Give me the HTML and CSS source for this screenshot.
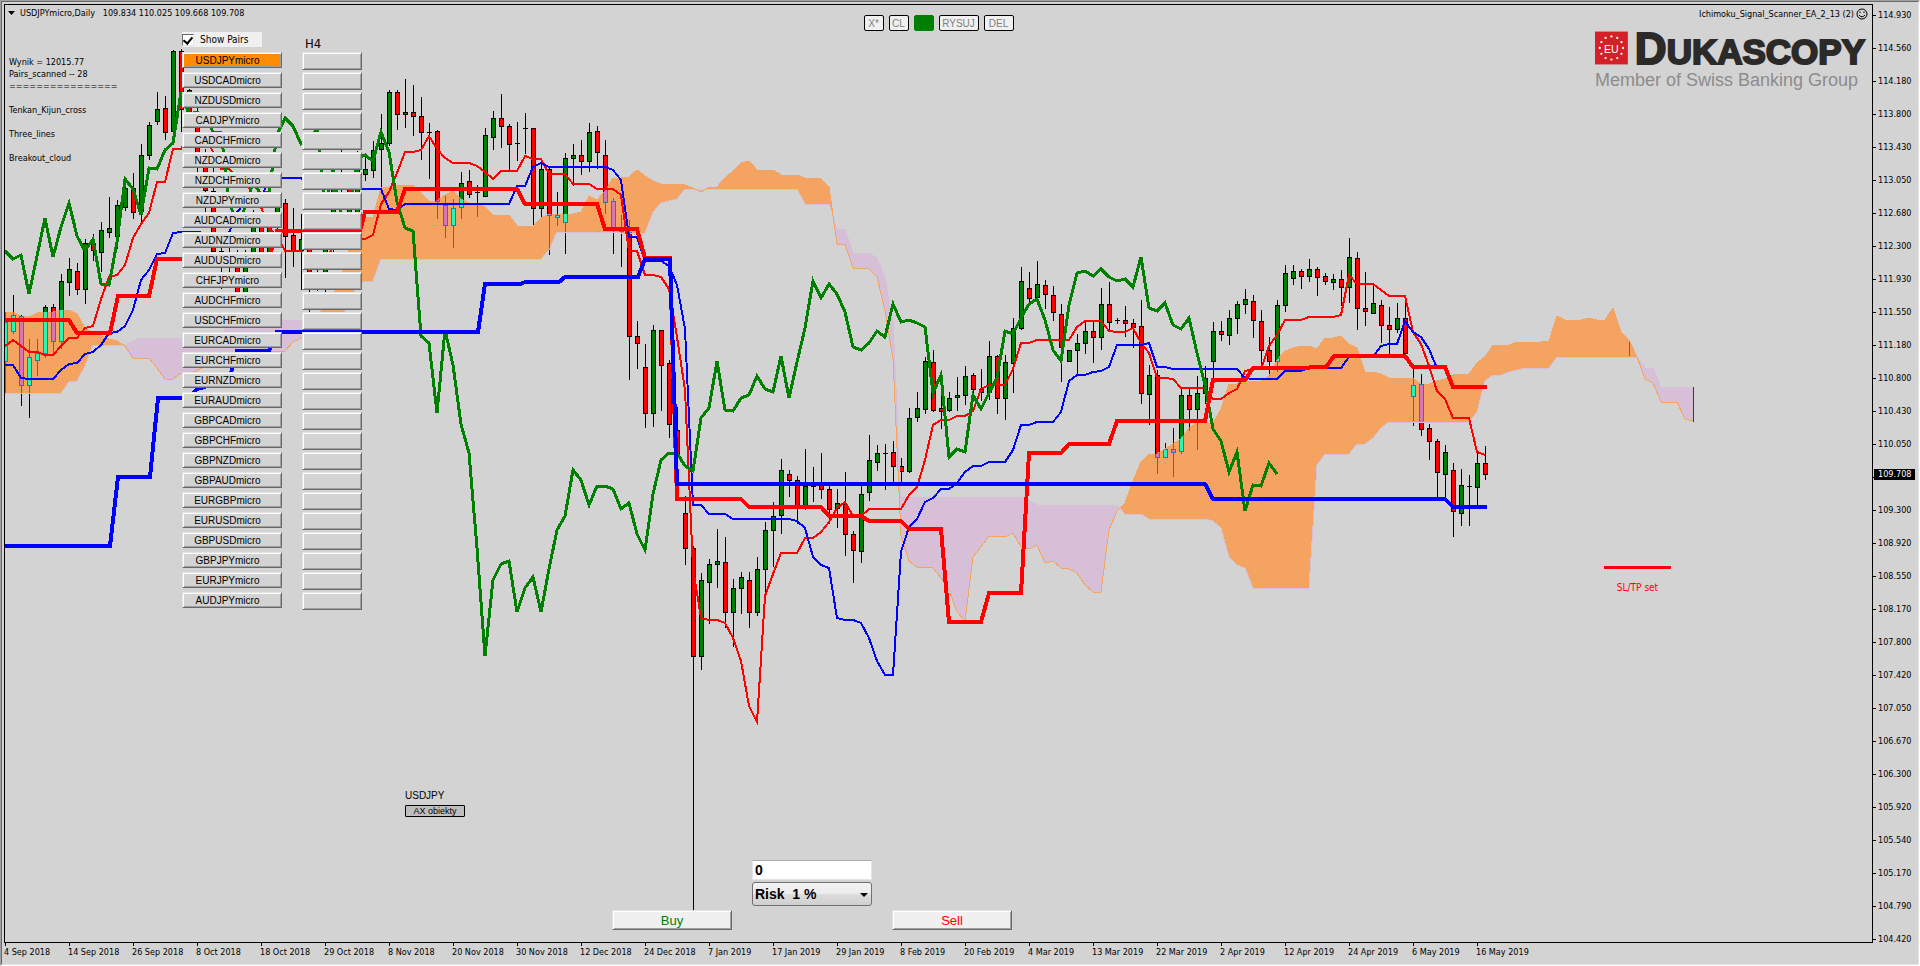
FILE: index.html
```html
<!DOCTYPE html>
<html lang="en">
  <head>
    <meta charset="UTF-8" />
    <meta name="viewport" content="width=device-width, initial-scale=1.0" />
    <title>USDJPYmicro,Daily</title>
    <link rel="stylesheet" href="styles.css" />
  </head>
  <body>
    <div class="frame">
      <main class="terminal">
        <section class="plot">
          <svg id="chart" class="chart" viewBox="5 5 1867 937" preserveAspectRatio="none"></svg>

          <h1 class="symbol">
            <svg width="7" height="4" viewBox="0 0 7 4"><path d="M0 0h7L3.5 4z" /></svg>
            USDJPYmicro,Daily&nbsp;&nbsp; 109.834 110.025 109.668 109.708
          </h1>

          <pre class="comment">
Wynik = 12015.77
Pairs_scanned -- 28
================

Tenkan_Kijun_cross

Three_lines

Breakout_cloud</pre>

          <div class="pairs">
            <label class="show-pairs"><input type="checkbox" id="showPairs" checked /> Show Pairs</label>
            <div id="pairList" class="pair-list"></div>
          </div>
          <div class="signals">
            <span class="timeframe">H4</span>
            <div id="signalList" class="signal-list"></div>
          </div>

          <div class="toolbar">
            <button>X*</button>
            <button>CL</button>
            <button class="on" aria-label="Active"></button>
            <button class="wide">RYSUJ</button>
            <button class="medium">DEL</button>
          </div>

          <div class="expert">
            Ichimoku_Signal_Scanner_EA_2_13 (2)
            <svg width="12" height="12" viewBox="0 0 12 12" fill="none" stroke="#000">
              <circle cx="6" cy="6" r="5" />
              <path d="M3 7q3 3.500 6 0M4 3.500v1.500M8 3.500v1.500" />
            </svg>
          </div>

          <div class="logo">
            <div class="logo-row">
              <svg width="34" height="34" viewBox="0 0 34 34">
                <rect width="34" height="34" fill="#d42027" />
                <text x="17" y="22" text-anchor="middle">EU</text>
                <g id="stars" fill="#fff"></g>
              </svg>
              <span class="logo-name"><b>D</b>UKASCOPY</span>
            </div>
            <div class="logo-sub">Member of Swiss Banking Group</div>
          </div>

          <div class="sltp">SL/TP set</div>

          <div class="objects">
            <span>USDJPY</span>
            <button>AX obiekty</button>
          </div>

          <form class="trade">
            <button type="button" class="buy">Buy</button>
            <div class="risk">
              <input type="text" value="0" aria-label="Volume" />
              <div class="select">
                <select aria-label="Risk">
                  <option>Risk &nbsp;1 %</option>
                  <option>Risk &nbsp;2 %</option>
                </select>
              </div>
            </div>
            <button type="button" class="sell">Sell</button>
          </form>
        </section>

        <aside class="price-axis">
          <ul id="prices"></ul>
          <span class="last-price">109.708</span>
        </aside>

        <ul id="dates" class="time-axis"></ul>
      </main>
    </div>
    <script src="script.js"></script>
  </body>
</html>
```
FILE: styles.css
```css
* {
  box-sizing: border-box;
}
body {
  margin: 0;
  height: 100vh;
  background: #d3d3d3;
  color: #000;
  font-family: "DejaVu Sans Condensed", "DejaVu Sans", sans-serif;
  font-size: 9px;
  line-height: 12px;
  overflow: hidden;
}
ul {
  list-style: none;
  margin: 0;
  padding: 0;
}
button,
input,
select {
  font-family: "Liberation Sans", Arial, sans-serif;
  margin: 0;
  padding: 0;
}

/* window edge */
.frame {
  height: 100%;
  border: 1px solid;
  border-color: #a0a0a0 #fff #fff #a0a0a0;
}
.terminal {
  height: 100%;
  display: grid;
  grid-template-columns: 1fr 45px;
  grid-template-rows: 1fr 21px;
  padding: 2px 0 0 2px;
  border: 1px solid;
  border-color: #696969 #e3e3e3 #e3e3e3 #696969;
}
.plot {
  position: relative;
  border: 1px solid #000;
  min-width: 0;
  overflow: hidden;
}
.chart {
  display: block;
  width: 100%;
  height: 100%;
  shape-rendering: crispEdges;
}
.chart polyline {
  fill: none;
}

/* axes */
.price-axis {
  grid-row: 1 / 3;
  grid-column: 2;
  position: relative;
}
.price-axis ul {
  height: 100%;
  display: flex;
  flex-direction: column;
  justify-content: space-between;
  padding: 5px 0 19px;
}
.price-axis li {
  display: flex;
  align-items: center;
  gap: 2px;
}
.price-axis li::before {
  content: "";
  width: 3px;
  height: 1px;
  background: #000;
}
.last-price {
  position: absolute;
  top: 465px;
  left: 1px;
  width: 41px;
  padding-left: 4px;
  line-height: 11px;
  background: #000;
  color: #fff;
}
.time-axis {
  display: flex;
  min-width: 0;
  overflow: hidden;
}
.time-axis li {
  flex: 0 0 64px;
  white-space: nowrap;
}
.time-axis li::before {
  content: "";
  display: block;
  width: 1px;
  height: 3px;
  margin-left: 1px;
  background: #000;
}

/* labels over the chart */
.symbol {
  position: absolute;
  top: 2px;
  left: 3px;
  display: flex;
  align-items: center;
  gap: 5px;
  margin: 0;
  font-size: 9px;
  font-weight: normal;
}
.comment {
  position: absolute;
  top: 51px;
  left: 4px;
  margin: 0;
  font-family: inherit;
}
.expert {
  position: absolute;
  top: 3px;
  right: 4px;
  display: flex;
  align-items: center;
  gap: 2px;
}

/* pair scanner */
.pairs {
  position: absolute;
  top: 27px;
  left: 177px;
  width: 100px;
}
.show-pairs {
  display: flex;
  align-items: center;
  gap: 6px;
  width: 80px;
  height: 15px;
  margin-bottom: 5px;
  background: #f0f0f0;
  font-size: 10px;
}
.show-pairs input {
  appearance: none;
  width: 12px;
  height: 12px;
  background: #fff;
  border: 1px solid;
  border-color: #696969 #e3e3e3 #e3e3e3 #696969;
}
.show-pairs input:checked::before {
  content: "";
  display: block;
  width: 4px;
  height: 7px;
  margin: 0 auto;
  border: solid #000;
  border-width: 0 2px 2px 0;
  transform: rotate(40deg);
}
.pair-list,
.signal-list {
  display: flex;
  flex-direction: column;
}
.pair-list {
  gap: 4px;
}
.pair-list[hidden] {
  display: none;
}
.signal-list {
  gap: 2px;
}
.pair-list button,
.signal-list button,
.trade button {
  background: #d3d3d3;
  border: 1px solid;
  border-color: #e3e3e3 #696969 #696969 #e3e3e3;
  box-shadow: inset 1px 1px #fff, inset -1px -1px #a0a0a0;
}
.pair-list button {
  height: 16px;
  font-size: 10px;
  padding-right: 9px;
}
.pair-list .active {
  background: #ff8c00;
}
.signals {
  position: absolute;
  top: 30px;
  left: 297px;
  width: 60px;
}
.timeframe {
  display: block;
  height: 17px;
  padding-left: 3px;
  font-size: 13px;
  line-height: 17px;
}
.signal-list button {
  height: 18px;
}

.toolbar {
  position: absolute;
  top: 10px;
  left: 0;
  right: 0;
  display: flex;
  justify-content: center;
  gap: 5px;
}
.toolbar button {
  width: 20px;
  height: 16px;
  border: 1px solid #000;
  border-radius: 2px;
  background: #f0f0f0;
  color: #808080;
  font-size: 10px;
}
.toolbar .on {
  background: #008000;
  border-color: #008000;
}
.toolbar .wide {
  width: 40px;
}
.toolbar .medium {
  width: 30px;
}

.logo {
  position: absolute;
  top: 26px;
  right: 7px;
  width: 270px;
}
.logo-row {
  display: flex;
  align-items: flex-end;
  gap: 7px;
  height: 34px;
}
.logo text {
  fill: #fff;
  font: 11px "Liberation Sans", Arial, sans-serif;
}
.logo-name {
  font: bold 35px/27px "Liberation Sans", Arial, sans-serif;
  color: #2b2a29;
  -webkit-text-stroke: 2px #2b2a29;
}
.logo-name b {
  font-size: 44px;
}
.logo-sub {
  margin-top: 4px;
  color: #8c8c8c;
  font: 18px/22px "Liberation Sans", Arial, sans-serif;
  white-space: nowrap;
}

.sltp {
  position: absolute;
  top: 561px;
  right: 201px;
  width: 67px;
  padding-top: 13px;
  border-top: 3px solid #f00;
  color: #f00;
  font-size: 10px;
  text-align: center;
}

.objects {
  position: absolute;
  bottom: 125px;
  left: 400px;
  display: flex;
  flex-direction: column;
  gap: 3px;
  width: 60px;
  font: 10px/12px "Liberation Sans", Arial, sans-serif;
}
.objects button {
  height: 12px;
  border: 1px solid #000;
  border-radius: 1px;
  background: #bebebe;
  font-size: 9px;
  line-height: 10px;
}

/* order panel */
.trade {
  position: absolute;
  bottom: 12px;
  left: 607px;
  display: flex;
  align-items: flex-end;
  gap: 20px;
}
.trade button {
  width: 120px;
  height: 20px;
  background: #f0f0f0;
  font-size: 13px;
}
.trade .buy {
  color: #008000;
}
.trade .sell {
  color: #f00;
}
.risk {
  display: flex;
  flex-direction: column;
  gap: 2px;
  width: 120px;
  padding-bottom: 24px;
}
.risk input {
  width: 100%;
  height: 20px;
  padding-left: 2px;
  border: 1px solid;
  border-color: #abadb3 #e2e3ea #e2e3ea;
  background: #fff;
  font-size: 14px;
  font-weight: bold;
}
.select {
  position: relative;
}
.select select {
  display: block;
  appearance: none;
  width: 100%;
  height: 24px;
  padding-left: 2px;
  border: 1px solid #707070;
  border-radius: 3px;
  background: linear-gradient(#f2f2f2, #ebebeb 50%, #dddddd 50%, #cfcfcf);
  color: #000;
  font-size: 14px;
  font-weight: bold;
}
.select::after {
  content: "";
  position: absolute;
  top: 11px;
  right: 4px;
  border: solid transparent;
  border-width: 4px 4px 0;
  border-top-color: #000;
}
```
FILE: script.js
```js
const pairs = [
  "USDJPY", "USDCAD", "NZDUSD", "CADJPY", "CADCHF", "NZDCAD", "NZDCHF",
  "NZDJPY", "AUDCAD", "AUDNZD", "AUDUSD", "CHFJPY", "AUDCHF", "USDCHF",
  "EURCAD", "EURCHF", "EURNZD", "EURAUD", "GBPCAD", "GBPCHF", "GBPNZD",
  "GBPAUD", "EURGBP", "EURUSD", "GBPUSD", "GBPJPY", "EURJPY", "AUDJPY",
];
const prices = [
  "114.930", "114.560", "114.180", "113.800", "113.430", "113.050", "112.680",
  "112.300", "111.930", "111.550", "111.180", "110.800", "110.430", "110.050",
  "109.670", "109.300", "108.920", "108.550", "108.170", "107.800", "107.420",
  "107.050", "106.670", "106.300", "105.920", "105.540", "105.170", "104.790",
  "104.420",
];
const dates = [
  "4 Sep 2018", "14 Sep 2018", "26 Sep 2018", "8 Oct 2018", "18 Oct 2018",
  "29 Oct 2018", "8 Nov 2018", "20 Nov 2018", "30 Nov 2018", "12 Dec 2018",
  "24 Dec 2018", "7 Jan 2019", "17 Jan 2019", "29 Jan 2019", "8 Feb 2019",
  "20 Feb 2019", "4 Mar 2019", "13 Mar 2019", "22 Mar 2019", "2 Apr 2019",
  "12 Apr 2019", "24 Apr 2019", "6 May 2019", "16 May 2019",
];

// open, high, low, close on the chart's vertical scale
const candles = [
  [361,312,393,322],[331,295,333,315],[316,315,405,385],[385,339,417,357],[360,339,375,353],
  [353,305,357,307],[307,304,352,341],[341,274,348,281],[282,258,295,269],[271,263,294,289],
  [289,239,303,243],[243,234,260,250],[252,222,271,230],[232,197,237,228],[236,200,248,205],
  [207,182,210,188],[188,173,218,212],[211,144,223,155],[155,122,159,125],[121,92,124,109],
  [108,96,139,132],[131,50,133,51],[51,49,131,109],[90,89,113,112],[112,107,180,152],
  [155,149,225,190],[191,165,255,251],[251,240,288,259],[259,240,280,255],[255,250,307,294],
  [294,250,300,256],[256,210,262,218],[218,212,262,257],[257,220,262,227],[227,195,230,203],
  [203,199,277,236],[235,208,266,251],[250,214,289,239],[239,230,329,284],[284,262,290,285],
  [285,238,293,242],[242,165,255,179],[179,149,200,189],[189,180,225,215],[215,151,220,168],
  [174,157,180,169],[170,141,177,150],[149,114,193,143],[143,90,145,92],[92,90,129,114],
  [114,79,127,112],[112,85,135,116],[116,97,159,132],[132,123,178,132],[131,130,218,201],
  [205,196,237,225],[225,199,247,208],[207,172,218,183],[181,170,197,194],[192,185,216,192],
  [196,128,196,135],[137,111,149,118],[118,94,147,126],[126,124,169,144],[143,122,160,143],
  [128,113,153,128],[128,128,224,208],[208,163,217,169],[169,167,254,215],[217,192,225,215],
  [222,153,253,158],[158,144,185,155],[155,140,174,161],[161,123,171,132],[131,126,168,152],
  [155,140,213,202],[201,198,253,228],[229,215,266,231],[232,220,379,336],[336,321,368,343],
  [367,344,427,413],[413,325,426,330],[330,330,410,365],[363,360,437,424],[430,407,476,453],
  [513,496,564,548],[548,546,915,656],[656,573,669,580],[582,559,623,564],[564,529,587,561],
  [562,537,627,612],[612,579,646,588],[588,572,613,577],[580,572,627,612],[612,557,615,569],
  [569,522,594,530],[530,502,566,516],[515,459,533,470],[474,470,496,480],[480,476,523,505],
  [505,449,509,486],[486,467,501,486],[485,453,498,489],[489,485,523,509],[508,489,527,503],
  [504,472,555,534],[534,531,582,550],[551,483,562,494],[492,435,500,460],[462,445,470,453],
  [453,444,489,453],[452,441,482,466],[466,458,481,471],[471,408,472,418],[417,392,421,408],
  [409,357,413,361],[362,350,411,410],[408,392,428,411],[410,392,411,398],[397,377,410,395],
  [395,366,404,376],[375,373,398,389],[389,369,400,392],[392,341,399,356],[356,355,413,398],
  [398,355,419,362],[363,318,392,328],[328,267,329,281],[288,272,303,298],[297,261,297,284],
  [285,280,308,294],[295,286,320,312],[314,304,381,347],[361,350,361,350],[350,334,373,343],
  [343,321,353,331],[331,322,362,337],[337,288,349,304],[304,282,330,322],[320,318,323,320],
  [320,306,336,323],[323,319,347,327],[326,300,403,393],[394,365,424,375],[375,370,473,457],
  [457,443,457,449],[449,428,476,452],[451,388,453,395],[395,387,430,409],[409,376,449,393],
  [393,366,403,378],[361,322,380,331],[331,321,340,334],[335,310,344,318],[318,301,333,304],
  [304,289,313,299],[301,295,337,320],[321,310,364,350],[350,337,375,361],[361,300,371,305],
  [305,265,311,273],[278,265,284,271],[271,269,288,276],[276,259,281,269],[269,267,295,277],
  [276,273,284,281],[282,274,289,279],[279,270,305,287],[287,238,302,257],[258,252,329,308],
  [308,272,325,311],[313,283,313,303],[305,300,342,325],[325,307,354,329],[329,303,332,318],
  [318,299,354,353],[396,367,425,385],[384,374,435,429],[428,424,459,441],[441,439,498,472],
  [474,445,497,452],[470,463,536,511],[513,469,525,485],[486,475,525,486],[487,450,507,463],
  [463,446,479,474],
];

// values for the bars whose look-back reaches before the first candle
const firstTenkan = [346, 340, 346, 352, 352, 355, 355, 346];
const firstKijun = [
  365, 365, 378, 379, 379, 379, 379, 370, 364, 363, 354, 352, 345, 333, 332,
  326, 310, 280, 270, 254, 253, 233, 232, 232, 232,
];
const firstSpanA = [
  312, 312, 316, 317, 313, 312, 312, 310, 310, 314, 328, 333, 336, 339, 341,
  346, 358, 358, 358, 368, 379, 379, 373, 373, 371, 366, 366, 364, 362, 360,
  358, 356, 354, 352, 351, 351, 342, 338, 330, 316, 306, 296, 276, 250, 225,
  217, 217, 188, 187, 185, 185,
];
const firstSpanB = [
  393, 393, 393, 393, 393, 393, 393, 393, 382, 381, 366, 345, 345, 345, 345,
  345, 341, 338, 338, 338, 338, 338, 338, 338, 338, 338, 338, 338, 320, 320,
  320, 320, 320, 320, 320, 320, 320, 320, 320, 320, 320, 320, 318, 305, 285,
  281, 281, 259, 259, 259, 259, 259, 259, 259, 259, 259, 259, 259, 259, 259,
  259, 259, 259, 259, 259, 259, 259, 259, 250, 232, 232, 232, 232, 232, 232,
  232, 232,
];

// weekly lines
const weeklyTenkan =
  "5,320 69,320 77,333 110,333 118,296 149,296 157,259 269,259 277,231 360,231 365,212 397,212 405,189 517,189 525,204 597,204 605,229 637,229 645,258 670,258 677,499 741,499 749,507 821,507 829,516 861,516 869,521 901,521 909,529 941,529 949,622 981,622 989,593 1021,593 1029,453 1061,453 1069,444 1109,444 1117,421 1205,421 1213,380 1245,380 1253,368 1293,368 1326,367 1334,356 1405,356 1413,367 1445,367 1453,387 1487,387";
const weeklyKijun =
  "5,546 110,546 118,477 150,477 158,398 189,398 197,389 229,380 237,351 269,351 277,332 478,332 485,284 521,284 525,282 559,282 565,277 638,277 645,259 670,259 677,484 1205,484 1213,499 1445,499 1453,507 1487,507";

const STEP = 8;
const x = (i) => 5 + i * STEP;

function middle(end, period) {
  const part = candles.slice(end - period + 1, end + 1);
  const high = Math.min(...part.map((c) => c[1]));
  const low = Math.max(...part.map((c) => c[2]));
  return (high + low) / 2;
}

function line(values, color, width) {
  const points = values.map((y, i) => x(i) + "," + Math.round(y)).join(" ");
  return `<polyline points="${points}" stroke="${color}" stroke-width="${width}"/>`;
}

function drawCandles(up, down, ink) {
  let out = "";
  candles.forEach(([open, high, low, close], i) => {
    const top = Math.min(open, close);
    const height = Math.abs(open - close) + 1;
    out += `<path fill="${ink}" d="M${x(i)} ${high}h1V${low + 1}h-1zM${x(i) - 2} ${top}h5v${height}h-5z"/>`;
    if (height > 2) {
      out += `<path fill="${close < open ? up : down}" d="M${x(i) - 1} ${top + 1}h3v${height - 2}h-3z"/>`;
    }
  });
  return out;
}

function drawChart() {
  const tenkan = candles.map((c, i) => (i < 8 ? firstTenkan[i] : middle(i, 9)));
  const kijun = candles.map((c, i) => (i < 25 ? firstKijun[i] : middle(i, 26)));
  const spanA = firstSpanA.slice();
  const spanB = firstSpanB.slice();
  for (let i = spanA.length; i < candles.length + 26; i++) {
    spanA.push((tenkan[i - 26] + kijun[i - 26]) / 2);
  }
  for (let i = spanB.length; i < candles.length + 26; i++) {
    spanB.push(middle(i - 26, 52));
  }
  const chikou = candles.slice(26).map((c) => c[3]);

  let bull = "";
  let bear = "";
  for (let i = 0; i < spanA.length - 1; i++) {
    const a1 = spanA[i], a2 = spanA[i + 1], b1 = spanB[i], b2 = spanB[i + 1];
    const d1 = b1 - a1, d2 = b2 - a2;
    if (d1 * d2 < 0) {
      const t = d1 / (d1 - d2);
      const cross = `${x(i) + STEP * t} ${a1 + (a2 - a1) * t}`;
      const left = `M${x(i)} ${a1}L${cross}L${x(i)} ${b1}z`;
      const right = `M${x(i + 1)} ${a2}L${cross}L${x(i + 1)} ${b2}z`;
      bull += d1 > 0 ? left : right;
      bear += d1 > 0 ? right : left;
    } else {
      const part = `M${x(i)} ${a1}L${x(i + 1)} ${a2}V${b2}L${x(i)} ${b1}z`;
      if (d1 + d2 > 0) bull += part;
      else bear += part;
    }
  }

  document.getElementById("chart").innerHTML = `
    <clipPath id="cloud"><path d="${bull}"/></clipPath>
    ${drawCandles("#008000", "#ff0000", "#000")}
    <path d="${bear}" fill="#d8bfd8"/>
    <path d="${bull}" fill="#f4a460"/>
    ${line(spanB, "#d8bfd8", 1)}
    ${line(spanA, "#f4a460", 1)}
    <g clip-path="url(#cloud)">${drawCandles("#27f7b3", "#d877b3", "#2777b3")}</g>
    <path d="M1629 342h1v14h-1z" fill="#2777b3"/>
    <path d="M1693 387h1v35h-1z" fill="#006400"/>
    ${line(tenkan, "#ff0000", 2)}
    ${line(kijun, "#0000ff", 2)}
    ${line(chikou, "#008000", 3)}
    <polyline points="${weeklyTenkan}" stroke="#ff0000" stroke-width="4"/>
    <polyline points="${weeklyKijun}" stroke="#0000ff" stroke-width="4"/>`;
}

function fillLists() {
  document.getElementById("pairList").innerHTML = pairs
    .map((p, i) => `<button${i === 0 ? ' class="active"' : ""}>${p}micro</button>`)
    .join("");
  document.getElementById("signalList").innerHTML = pairs
    .map((p) => `<button aria-label="${p} H4 signal"></button>`)
    .join("");
  document.getElementById("prices").innerHTML = prices.map((p) => `<li>${p}</li>`).join("");
  document.getElementById("dates").innerHTML = dates.map((d) => `<li>${d}</li>`).join("");
}

function drawStars() {
  let out = "";
  for (let i = 0; i < 12; i++) {
    const a = (i * Math.PI) / 6;
    out += `<circle cx="${17 + 12 * Math.sin(a)}" cy="${17 - 12 * Math.cos(a)}" r="1.2"/>`;
  }
  document.getElementById("stars").innerHTML = out;
}

document.getElementById("showPairs").addEventListener("change", (e) => {
  document.getElementById("pairList").hidden = !e.target.checked;
});

fillLists();
drawStars();
drawChart();
```
